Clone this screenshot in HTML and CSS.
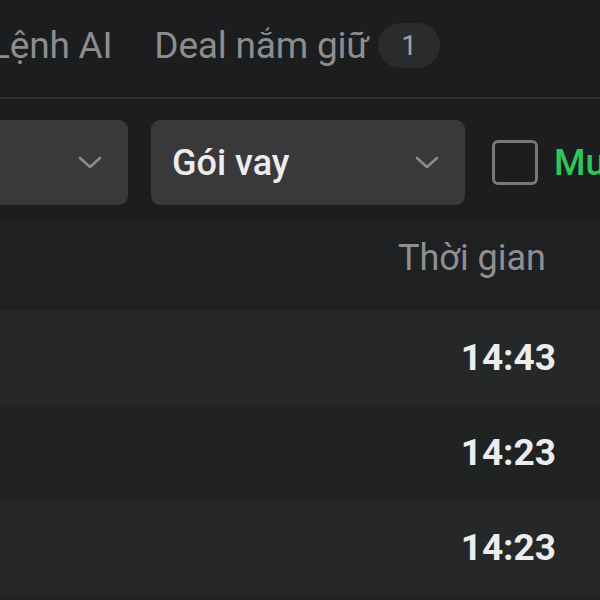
FILE: index.html
```html
<!DOCTYPE html>
<html lang="vi">
<head>
<meta charset="utf-8">
<link rel="stylesheet" href="styles.css">
</head>
<body>
<div class="page">
  <div class="tabs">
    <div class="tab">Lệnh AI</div>
    <div class="tab">Deal nắm giữ <span class="badge">1</span></div>
  </div>
  <div class="filters">
    <div class="select select-first">
      <span class="select-label"></span>
      <svg class="chev" viewBox="0 0 24 14" width="24" height="14"><path d="M2 2 L12 11 L22 2" fill="none" stroke="#8a8a8c" stroke-width="2.6" stroke-linecap="round" stroke-linejoin="round"/></svg>
    </div>
    <div class="select select-second">
      <span class="select-label">Gói vay</span>
      <svg class="chev" viewBox="0 0 24 14" width="24" height="14"><path d="M2 2 L12 11 L22 2" fill="none" stroke="#8a8a8c" stroke-width="2.6" stroke-linecap="round" stroke-linejoin="round"/></svg>
    </div>
    <label class="check">
      <span class="box"></span>
      <span class="check-label">Mua</span>
    </label>
  </div>
  <div class="table">
    <div class="thead"><span class="th">Thời gian</span></div>
    <div class="row odd"><span class="time">14:43</span></div>
    <div class="row even"><span class="time">14:23</span></div>
    <div class="row odd"><span class="time">14:23</span></div>
  </div>
</div>
</body>
</html>
```

FILE: styles.css
```css
* { box-sizing: border-box; }
html, body {
  margin: 0;
  padding: 0;
  background: #212224;
  width: 600px;
  height: 600px;
  overflow: hidden;
}
.page {
  font-family: Roboto, "Noto Sans", sans-serif;
  width: 600px;
}
.tabs {
  display: flex;
  align-items: center;
  gap: 42px;
  height: 99px;
  margin-left: -10px;
  padding-bottom: 6px;
  border-bottom: 2px solid #2e2f31;
  background: #1c1d1f;
}
.tab {
  font-size: 37px;
  color: #8d8d8f;
  display: flex;
  align-items: center;
  white-space: nowrap;
  letter-spacing: -0.2px;
}
.badge {
  display: inline-flex;
  align-items: center;
  justify-content: center;
  width: 62px;
  height: 45px;
  border-radius: 23px;
  background: #2a2b2d;
  color: #a3a3a5;
  font-size: 28px;
  margin-left: 9px;
}
.filters {
  display: flex;
  align-items: flex-start;
  gap: 23px;
  padding-top: 21px;
  height: 121px;
  background: #1c1d1f;
}
.select {
  height: 85px;
  background: #39393b;
  border-radius: 9px;
  display: flex;
  align-items: center;
  justify-content: space-between;
  padding: 0 26px 0 21px;
  flex-shrink: 0;
}
.select-first {
  width: 300px;
  margin-left: -172px;
}
.select-second {
  width: 314px;
}
.select-label {
  font-size: 36px;
  font-weight: 500;
  color: #ececee;
}
.chev { display: block; }
.check {
  display: flex;
  align-items: center;
  gap: 16px;
  height: 85px;
  flex-shrink: 0;
  margin-left: 4px;
}
.box {
  width: 46px;
  height: 45px;
  border: 3px solid #78787a;
  border-radius: 6px;
}
.check-label {
  font-size: 36px;
  font-weight: 500;
  color: #2fc55b;
}
.thead {
  height: 90px;
  display: flex;
  align-items: center;
  justify-content: flex-end;
  padding-right: 54px;
  padding-bottom: 14px;
  background: #1f2022;
}
.th {
  font-size: 36px;
  color: #8f8f91;
}
.row {
  height: 95px;
  display: flex;
  align-items: center;
  justify-content: flex-end;
  padding-right: 44px;
}
.row.odd { background: #262729; }
.row.even { background: #212224; }
.time {
  font-size: 37px;
  font-weight: 700;
  color: #ececee;
}
```
